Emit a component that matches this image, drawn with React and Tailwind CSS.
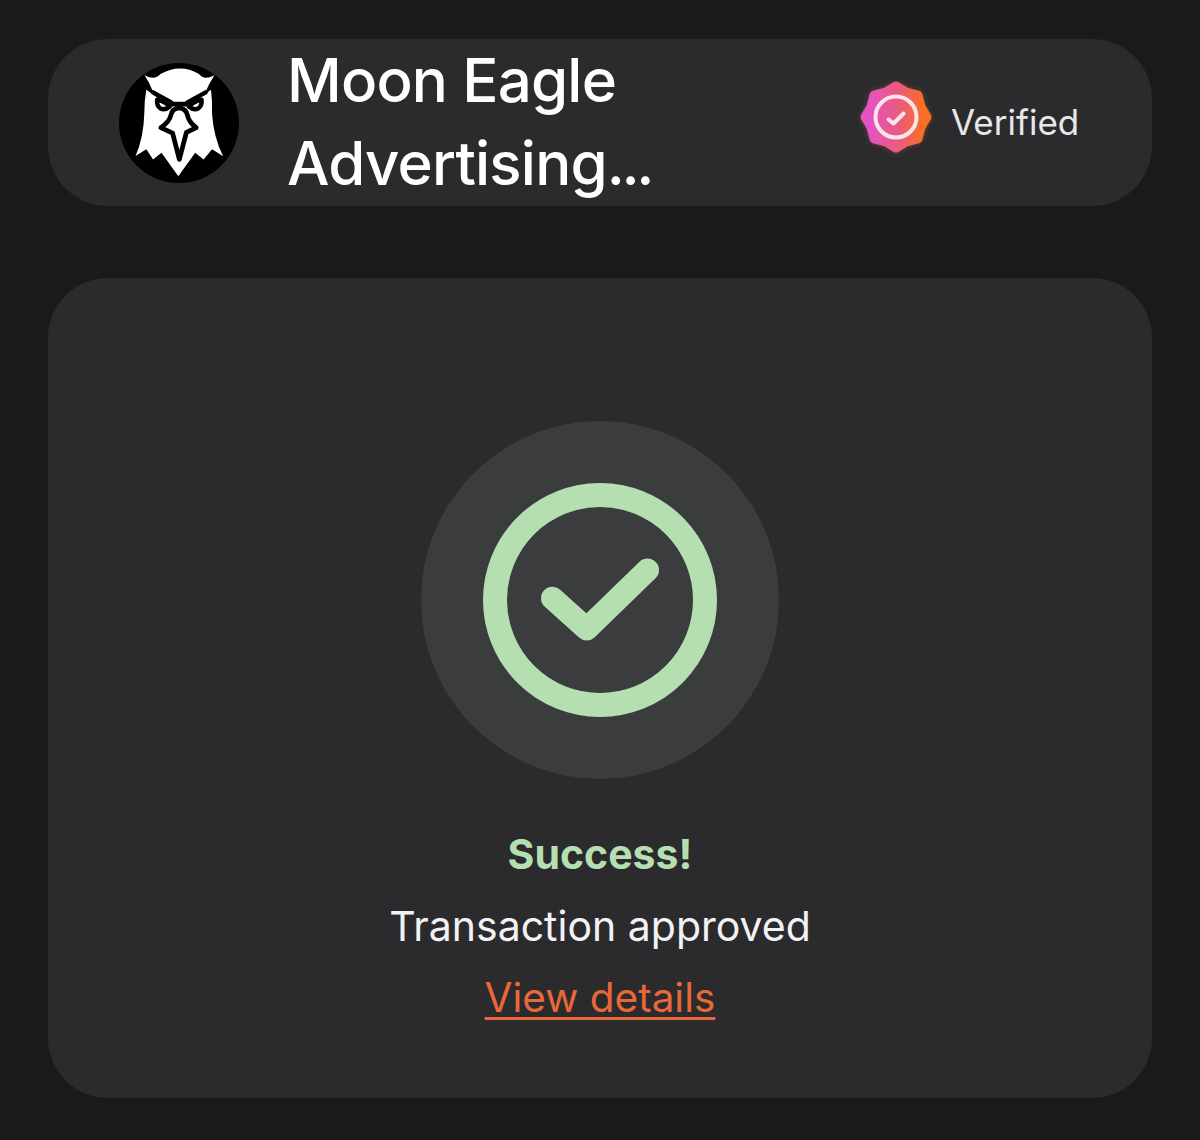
import React from "react";

// rounded 8 point seal for the verified badge
const sealPoints = Array.from({ length: 16 }, (_, i) => {
  const r = i % 2 === 0 ? 31 : 27;
  const a = (Math.PI / 8) * i - Math.PI / 2;
  return `${(40 + r * Math.cos(a)).toFixed(2)},${(40 + r * Math.sin(a)).toFixed(2)}`;
}).join(" ");

const EagleLogo = () => (
  <svg viewBox="59 39 356 356" className="w-[120px] h-[120px] shrink-0">
    <circle cx="237" cy="217" r="178" fill="#000" />
    {/* head */}
    <path
      fill="#fff"
      d="M135 75 Q165 92 182 72 Q210 55 240 55 Q272 55 296 72 Q312 92 342 75 Q326 100 316 124 L262 154 L212 154 L160 124 Q150 98 135 75 Z"
    />
    {/* face */}
    <path
      fill="#fff"
      d="M140 118 L210 168 L265 168 L332 118 Q336 150 335 190 Q340 260 368 316 L335 295 L310 325 L285 305 L235 375 L185 305 L160 325 L140 295 L108 315 Q132 260 134 190 Q134 150 140 118 Z"
    />
    {/* eyes */}
    <path
      d="M172 148 Q196 154 210 168 Q196 180 182 174 Q170 166 172 148 Z M304 148 Q280 154 266 168 Q280 180 294 174 Q306 166 304 148 Z"
      fill="#fff"
      stroke="#000"
      strokeWidth="13"
      strokeLinejoin="round"
    />
    {/* brow */}
    <path d="M160 126 L214 156 M316 126 L262 156" stroke="#000" strokeWidth="13" strokeLinecap="round" />
    {/* beak */}
    <path
      d="M238 172 Q258 174 262 194 Q266 214 288 231 L259 245 L238 325 L218 247 L183 231 Q208 214 213 194 Q216 174 238 172 Z"
      fill="#fff"
      stroke="#000"
      strokeWidth="14"
      strokeLinejoin="round"
    />
  </svg>
);

const VerifiedBadge = () => (
  <svg viewBox="0 0 80 80" className="w-[80px] h-[80px] shrink-0 mb-[12px]">
    <defs>
      <linearGradient id="sealFill" x1="0" y1="0" x2="1" y2="0">
        <stop offset="0.05" stopColor="#e254c4" />
        <stop offset="0.55" stopColor="#ea5a7e" />
        <stop offset="0.95" stopColor="#f8701f" />
      </linearGradient>
      <filter id="sealGlow" x="-30%" y="-30%" width="160%" height="160%">
        <feGaussianBlur stdDeviation="2.5" />
      </filter>
    </defs>
    <polygon points={sealPoints} fill="#f0704a" stroke="#f0704a" strokeWidth="9" strokeLinejoin="round" opacity="0.35" filter="url(#sealGlow)" />
    <polygon points={sealPoints} fill="url(#sealFill)" stroke="url(#sealFill)" strokeWidth="9" strokeLinejoin="round" />
    <circle cx="40" cy="40" r="20.5" fill="none" stroke="#fce3ec" strokeWidth="4" />
    <path d="M32.5 42.5 L37.5 46.5 L47.5 36.5" fill="none" stroke="#fce3ec" strokeWidth="4" strokeLinecap="round" strokeLinejoin="round" />
  </svg>
);

const SuccessIcon = () => (
  <div className="w-[358px] h-[358px] rounded-full bg-[#3a3c3e] flex items-center justify-center">
    <svg viewBox="0 0 234 234" className="w-[234px] h-[234px]">
      <circle cx="117" cy="117" r="105" fill="none" stroke="#b5dfb0" strokeWidth="24" />
      <path
        d="M69.5 115.3 L103.7 146 L164.5 87"
        fill="none"
        stroke="#b5dfb0"
        strokeWidth="23"
        strokeLinecap="round"
        strokeLinejoin="round"
      />
    </svg>
  </div>
);

export default function App() {
  return (
    <div className="w-[1200px] h-[1140px] bg-[#1a1a1b] px-12 pt-[39px] font-['Inter',sans-serif] overflow-hidden">
      <div className="h-[167px] rounded-[60px] bg-[#2b2b2d] flex items-center pl-[71px]">
        <EagleLogo />
        <div className="ml-[48px] w-[521px] text-[60px] leading-[83px] font-medium text-white tracking-[-0.8px] -mt-[2px]">
          Moon Eagle
          <br />
          Advertising<span className="tracking-[-3.5px]">...</span>
        </div>
        <div className="ml-[48px] flex items-center gap-[15px]">
          <VerifiedBadge />
          <span className="text-[35px] leading-[44px] text-[#e8e8ea] -mt-[2px]">Verified</span>
        </div>
      </div>

      <div className="mt-[72px] h-[820px] rounded-[60px] bg-[#2b2b2d] flex flex-col items-center pt-[143px]">
        <SuccessIcon />
        <div className="mt-[50px] text-[41px] leading-[50px] font-bold text-[#b5dfb0]">Success!</div>
        <div className="mt-[22px] text-[41px] leading-[50px] text-[#f2f2f4]">Transaction approved</div>
        <a className="mt-[22px] text-[40.5px] leading-[50px] text-[#e8683a] underline underline-offset-[5px] decoration-[3px]">
          View details
        </a>
      </div>
    </div>
  );
}
